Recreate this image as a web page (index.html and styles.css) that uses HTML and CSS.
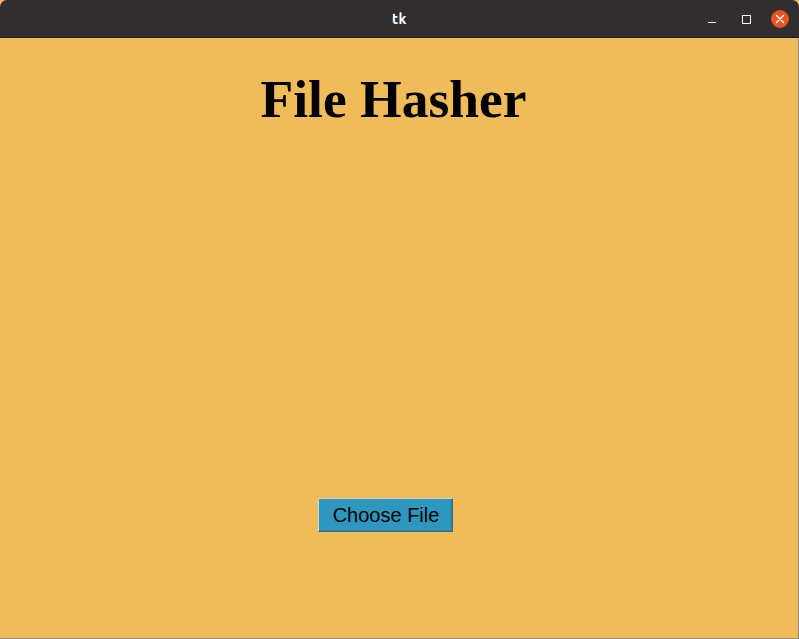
FILE: index.html
```html
<!DOCTYPE html>
<html>
<head>
<meta charset="utf-8">
<link rel="stylesheet" href="styles.css">
</head>
<body>
<div class="window">
  <div class="titlebar">
    <span class="title">tk</span>
    <div class="controls">
      <span class="ctl min"></span>
      <span class="ctl max"></span>
      <span class="ctl close">
        <svg width="18" height="18" viewBox="0 0 18 18"><circle cx="9" cy="9" r="9" fill="#e95420"/><path d="M5.5 5.5 L12.5 12.5 M12.5 5.5 L5.5 12.5" stroke="#fff" stroke-width="1.4" stroke-linecap="round"/></svg>
      </span>
    </div>
  </div>
  <div class="content">
    <h1 class="heading">File Hasher</h1>
    <div class="spacer"></div>
    <div class="actions">
      <button class="choose">Choose File</button>
    </div>
  </div>
</div>
</body>
</html>
```
FILE: styles.css
```css
html, body {
  margin: 0;
  padding: 0;
  background: #f0bc5a;
}
.window {
  width: 799px;
  height: 639px;
  display: flex;
  flex-direction: column;
  background: #f0bc5a;
}
.titlebar {
  height: 37px;
  flex: none;
  background: #302e2f;
  border-radius: 7px 7px 0 0;
  border-bottom: 1px solid #1f1e1f;
  display: flex;
  align-items: center;
  justify-content: center;
  position: relative;
}
.title {
  color: #ffffff;
  font-family: "Ubuntu", "DejaVu Sans", sans-serif;
  font-weight: bold;
  font-size: 14px;
  letter-spacing: 0.5px;
}
.controls {
  position: absolute;
  right: 10px;
  top: 10px;
  display: flex;
  align-items: center;
  gap: 0;
}
.ctl {
  display: block;
}
.min {
  width: 8px;
  height: 1px;
  background: #fff;
  margin-top: 6px;
  margin-right: 26px;
}
.max {
  width: 7px;
  height: 7px;
  border: 1px solid #fff;
  margin-right: 20px;
}
.close {
  width: 18px;
  height: 18px;
}
.close svg { display: block; }
.content {
  flex: 1;
  display: flex;
  flex-direction: column;
  border-right: 1px solid #8f8d86;
  border-bottom: 1px solid #8f8d86;
}
.heading {
  margin: 35px 0 0 0;
  font-family: "Liberation Serif", "Times New Roman", serif;
  font-weight: bold;
  font-size: 53.5px;
  line-height: 52px;
  text-align: center;
  color: #000;
  padding-right: 11px;
}
.spacer {
  height: 373px;
}
.actions {
  padding-left: 318px;
}
.choose {
  width: 135px;
  height: 34px;
  background: #2e97be;
  border: 1px solid;
  border-color: #d9d6cc #3b6b80 #3b6b80 #d9d6cc;
  box-shadow: inset -1px -1px 0 #2a7fa0;
  font-family: "Liberation Sans", Arial, sans-serif;
  font-size: 20px;
  color: #000;
  padding: 0 0 0 1px;
  margin: 0;
}
```
